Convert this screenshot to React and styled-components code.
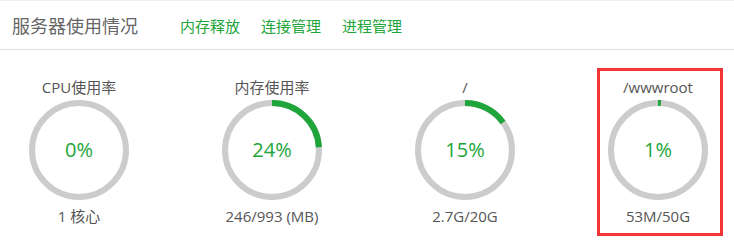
import React from "react";
import styled, { createGlobalStyle } from "styled-components";

const Global = createGlobalStyle`
  html, body { margin: 0; padding: 0; background: #fff; }
  body { font-family: "Open Sans", "Noto Sans CJK SC", sans-serif; }
`;

const Panel = styled.div`
  width: 734px;
  height: 251px;
  background: #fff;
  border-top: 1px solid #eceef2;
  box-sizing: border-box;
`;

const Header = styled.div`
  display: flex;
  align-items: center;
  height: 48px;
  border-bottom: 1px solid #dddddd;
  padding-left: 12px;
`;

const Title = styled.h2`
  margin: 0;
  font-size: 18px;
  font-weight: normal;
  color: #666;
  font-family: "Noto Sans CJK SC", sans-serif;
  letter-spacing: 0;
`;

const Links = styled.nav`
  display: flex;
  gap: 21px;
  margin-left: 42px;
`;

const Link = styled.a`
  font-size: 15px;
  color: #20a53a;
  text-decoration: none;
  font-family: "Noto Sans CJK SC", sans-serif;
  cursor: pointer;
`;

const Grid = styled.div`
  display: flex;
  gap: 43px;
  padding: 27px 0 0 4px;
`;

const Item = styled.div`
  position: relative;
  width: 150px;
  display: flex;
  flex-direction: column;
  align-items: center;
  ${(p) =>
    p.$marked &&
    `
    &::after {
      content: "";
      position: absolute;
      left: 14px;
      top: -9px;
      width: 126px;
      height: 168px;
      border: 3px solid #f53535;
      box-sizing: border-box;
      pointer-events: none;
    }
  `}
`;

const Label = styled.div`
  font-size: 15px;
  line-height: 20px;
  color: #555;
  margin-bottom: 3px;
`;

const Ring = styled.div`
  display: grid;
  width: 100px;
  height: 100px;
  & > * {
    grid-area: 1 / 1;
  }
`;

const Percent = styled.div`
  align-self: center;
  justify-self: center;
  font-size: 20px;
  color: #20a53a;
  line-height: 1;
`;

const Sub = styled.div`
  margin-top: 6px;
  font-size: 15px;
  line-height: 20px;
  color: #555;
`;

const R = 47;
const C = 2 * Math.PI * R;

function Gauge({ value }) {
  return (
    <Ring>
      <svg width="100" height="100" viewBox="0 0 100 100">
        <circle cx="50" cy="50" r={R} fill="none" stroke="#cccccc" strokeWidth="6" />
        <circle
          cx="50"
          cy="50"
          r={R}
          fill="none"
          stroke="#20a53a"
          strokeWidth="6"
          strokeDasharray={`${(C * value) / 100} ${C}`}
          transform="rotate(-90 50 50)"
        />
      </svg>
      <Percent>{value}%</Percent>
    </Ring>
  );
}

const data = [
  { label: "CPU使用率", value: 0, sub: "1 核心" },
  { label: "内存使用率", value: 24, sub: "246/993 (MB)" },
  { label: "/", value: 15, sub: "2.7G/20G" },
  { label: "/wwwroot", value: 1, sub: "53M/50G", marked: true },
];

export default function App() {
  return (
    <Panel>
      <Global />
      <Header>
        <Title>服务器使用情况</Title>
        <Links>
          <Link>内存释放</Link>
          <Link>连接管理</Link>
          <Link>进程管理</Link>
        </Links>
      </Header>
      <Grid>
        {data.map((d) => (
          <Item key={d.label} $marked={d.marked}>
            <Label>{d.label}</Label>
            <Gauge value={d.value} />
            <Sub>{d.sub}</Sub>
          </Item>
        ))}
      </Grid>
    </Panel>
  );
}
